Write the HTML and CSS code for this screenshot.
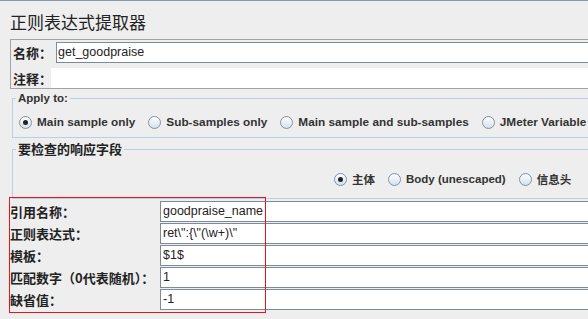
FILE: index.html
```html
<!DOCTYPE html>
<html lang="zh-CN">
<head>
  <meta charset="UTF-8" />
  <meta name="viewport" content="width=device-width, initial-scale=1.0"/>
  <title>正则表达式提取器</title>
  <link rel="stylesheet" href="styles.css">
</head>
<body>
  <div class="page">
    <h1 class="title">正则表达式提取器</h1>

    <div class="name-panel">
      <div class="name-row">
        <span class="label name-label">名称：</span>
        <div class="field name-field">get_goodpraise</div>
      </div>
      <div class="name-row comment-row">
        <span class="label comment-label">注释：</span>
        <div class="comment-field"></div>
      </div>
    </div>

    <fieldset class="group apply-group">
      <legend>Apply to:</legend>
      <div class="radios">
        <span class="radio checked"></span><span class="radio-text">Main sample only</span>
        <span class="radio"></span><span class="radio-text">Sub-samples only</span>
        <span class="radio"></span><span class="radio-text">Main sample and sub-samples</span>
        <span class="radio"></span><span class="radio-text">JMeter Variable</span>
      </div>
    </fieldset>

    <fieldset class="group field-group">
      <legend>要检查的响应字段</legend>
      <div class="radios field-radios">
        <span class="radio checked"></span><span class="radio-text">主体</span>
        <span class="radio"></span><span class="radio-text">Body (unescaped)</span>
        <span class="radio"></span><span class="radio-text">信息头</span>
      </div>
    </fieldset>

    <div class="params">
      <div class="param-row">
        <span class="label param-label">引用名称：</span>
        <div class="field param-field">goodpraise_name</div>
      </div>
      <div class="param-row">
        <span class="label param-label">正则表达式：</span>
        <div class="field param-field">ret\":{\"(\w+)\"</div>
      </div>
      <div class="param-row">
        <span class="label param-label">模板：</span>
        <div class="field param-field">$1$</div>
      </div>
      <div class="param-row">
        <span class="label param-label">匹配数字（0代表随机）：</span>
        <div class="field param-field">1</div>
      </div>
      <div class="param-row">
        <span class="label param-label">缺省值：</span>
        <div class="field param-field">-1</div>
      </div>
      <div class="mark"></div>
    </div>
  </div>
</body>
</html>
```

FILE: styles.css
```css
html, body {
  margin: 0;
  padding: 0;
  overflow: hidden;
  background: #eeeeee;
}
.page {
  width: 700px;
  height: 318px;
  border-top: 1px solid #8a97a5;
  font-family: "Liberation Sans", "Noto Sans CJK SC", sans-serif;
  color: #222;
}
.title {
  margin: 11px 0 0 10px;
  font-family: "Noto Sans CJK SC", sans-serif;
  font-size: 17px;
  font-weight: normal;
  line-height: 20px;
  color: #222;
}
.label {
  font-family: "Noto Sans CJK SC", sans-serif;
  font-weight: bold;
  font-size: 13px;
  color: #222;
  white-space: nowrap;
}
.name-panel {
  margin: 7px 0 0 10px;
  border: 1px solid #a3a3a3;
  border-right: none;
  padding: 1px 0 0 2px;
}
.name-row {
  display: flex;
  align-items: center;
  margin-top: 1px;
  height: 21px;
}
.comment-row {
  margin-top: 5px;
  height: 20px;
}
.name-label {
  width: 43px;
}
.comment-label {
  width: 38px;
}
.field {
  flex: 1;
  box-sizing: border-box;
  height: 21px;
  background: #fff;
  border: 1px solid #7d8b98;
  border-right: none;
  font-size: 12.5px;
  line-height: 19px;
  color: #222;
  white-space: nowrap;
}
.name-field {
  padding-left: 1px;
}
.comment-field {
  flex: 1;
  height: 20px;
  background: #fff;
}
.group {
  margin: 2px 0 0 12px;
  padding: 0 0 0 6px;
  border: 1px solid #b8cfe5;
  border-right: none;
  min-width: 0;
}
.group legend {
  margin-left: -3px;
  padding: 0 2px;
  font-weight: bold;
  font-size: 11.5px;
  line-height: 14px;
  color: #333;
}
.field-group {
  margin-top: 4px;
}
.field-group legend {
  font-family: "Noto Sans CJK SC", sans-serif;
  font-size: 13px;
  color: #222;
}
.radios {
  display: flex;
  align-items: center;
  height: 20px;
  margin: 7px 0 5px 0;
  white-space: nowrap;
  font-weight: bold;
  font-size: 11.8px;
  color: #333;
}
.field-radios {
  margin: 13px 0 9px 0;
  padding-left: 315px;
  font-size: 11.5px;
}
.radio {
  box-sizing: border-box;
  width: 13px;
  height: 13px;
  border: 1px solid #7f93a8;
  border-radius: 50%;
  background: linear-gradient(#ffffff, #d4e0ec);
  margin-right: 5px;
  display: flex;
  align-items: center;
  justify-content: center;
  flex: none;
}
.radio.checked::after {
  content: "";
  width: 5px;
  height: 5px;
  border-radius: 50%;
  background: #222;
}
.radio-text {
  margin-right: 13px;
}
.params {
  position: relative;
  margin-top: 2px;
  padding-left: 10px;
}
.param-row {
  display: flex;
  align-items: center;
  height: 21px;
  margin-bottom: 1px;
}
.param-label {
  width: 150px;
}
.param-field {
  padding-left: 2px;
}
.mark {
  position: absolute;
  left: 9px;
  top: -4px;
  width: 257px;
  height: 116px;
  box-sizing: border-box;
  border: 1px solid #e8151b;
}
```
